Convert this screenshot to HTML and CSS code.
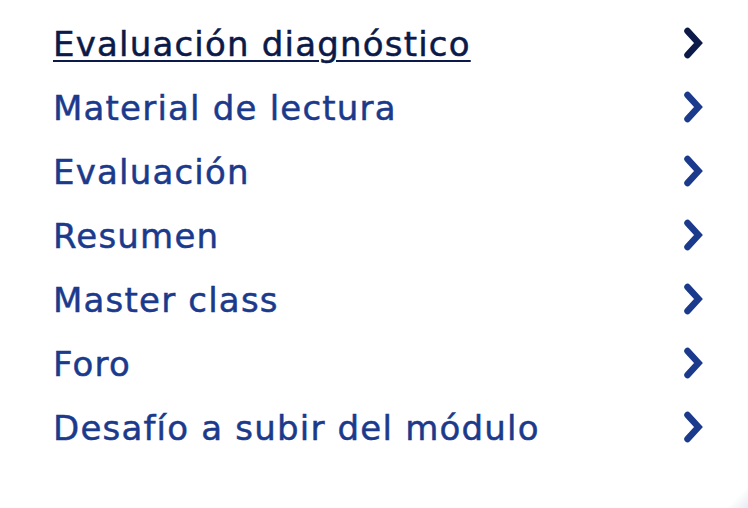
FILE: index.html
```html
<!DOCTYPE html>
<html lang="es">
<head>
<meta charset="utf-8">
<title>Módulo</title>
<link rel="stylesheet" href="styles.css">
</head>
<body>
<nav class="menu">
  <ul class="menu-list">
    <li><a class="menu-item active" href="#"><span class="label">Evaluación diagnóstico</span><svg class="chev" viewBox="0 0 22 32" width="22" height="32"><path d="M5.5 4 L16.5 16 L5.5 28"/></svg></a></li>
    <li><a class="menu-item" href="#"><span class="label">Material de lectura</span><svg class="chev" viewBox="0 0 22 32" width="22" height="32"><path d="M5.5 4 L16.5 16 L5.5 28"/></svg></a></li>
    <li><a class="menu-item" href="#"><span class="label">Evaluación</span><svg class="chev" viewBox="0 0 22 32" width="22" height="32"><path d="M5.5 4 L16.5 16 L5.5 28"/></svg></a></li>
    <li><a class="menu-item" href="#"><span class="label">Resumen</span><svg class="chev" viewBox="0 0 22 32" width="22" height="32"><path d="M5.5 4 L16.5 16 L5.5 28"/></svg></a></li>
    <li><a class="menu-item" href="#"><span class="label">Master class</span><svg class="chev" viewBox="0 0 22 32" width="22" height="32"><path d="M5.5 4 L16.5 16 L5.5 28"/></svg></a></li>
    <li><a class="menu-item" href="#"><span class="label">Foro</span><svg class="chev" viewBox="0 0 22 32" width="22" height="32"><path d="M5.5 4 L16.5 16 L5.5 28"/></svg></a></li>
    <li><a class="menu-item" href="#"><span class="label">Desafío a subir del módulo</span><svg class="chev" viewBox="0 0 22 32" width="22" height="32"><path d="M5.5 4 L16.5 16 L5.5 28"/></svg></a></li>
  </ul>
</nav>
<div class="corner"></div>
</body>
</html>
```
FILE: styles.css
```css
html, body {
  margin: 0;
  padding: 0;
  width: 748px;
  height: 508px;
  background: #ffffff;
  overflow: hidden;
}
body {
  position: relative;
  font-family: "DejaVu Sans", "Noto Sans", sans-serif;
}
.menu {
  padding: 12px 44px 0 53px;
}
.menu-list {
  list-style: none;
  margin: 0;
  padding: 0;
  display: flex;
  flex-direction: column;
}
.menu-item {
  display: flex;
  align-items: center;
  justify-content: space-between;
  height: 64px;
  text-decoration: none;
  color: #1b3a8c;
}
.label {
  font-size: 34px;
  line-height: 64px;
  letter-spacing: 1.2px;
  -webkit-text-stroke: 0.5px currentColor;
  white-space: nowrap;
}
.menu-item.active {
  color: #0b1a48;
}
.menu-item.active .label {
  text-decoration: underline;
  text-decoration-thickness: 2px;
  text-underline-offset: 4px;
}
.chev {
  display: block;
  flex: none;
  margin-top: -2px;
}
.chev path {
  fill: none;
  stroke: currentColor;
  stroke-width: 6.5;
  stroke-linecap: round;
  stroke-linejoin: miter;
}
.corner {
  position: absolute;
  right: 0;
  bottom: 0;
  width: 22px;
  height: 22px;
  background: linear-gradient(135deg, rgba(255,255,255,0) 50%, rgba(214,222,232,0.6) 100%);
}
```
